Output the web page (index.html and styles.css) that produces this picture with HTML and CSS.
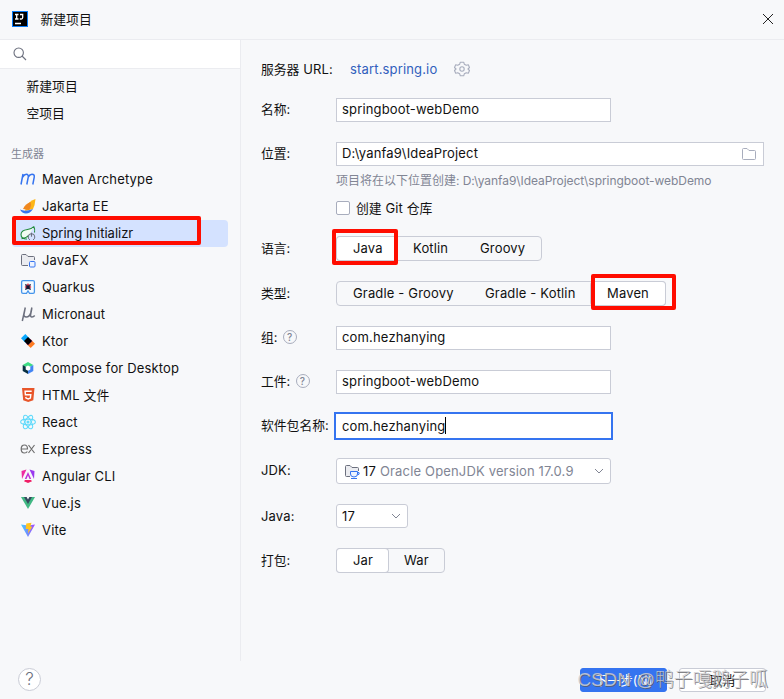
FILE: index.html
```html
<!DOCTYPE html>
<html lang="zh-CN">
<head>
<meta charset="utf-8">
<title>新建项目</title>
<link rel="stylesheet" href="styles.css">
</head>
<body>
<div class="window">
  <header class="titlebar">
    <svg class="app-icon" width="16" height="16" viewBox="0 0 16 16"><rect width="16" height="16" fill="#087cfa"/><rect x="1" y="1" width="14" height="14" fill="#000"/><path d="M3 3.500h3.500M4.700 3.500v4.500M3 8h3.500M8 3.500h2.700v3q0 1.500-1.500 1.500H7.800M3 12.500h6" fill="none" stroke="#fff" stroke-width="1.300"/></svg>
    <span class="zh">新建项目</span>
    <svg class="close" width="12" height="12" viewBox="0 0 12 12"><path d="M1 1l10 10M11 1L1 11" stroke="#222" stroke-width="1"/></svg>
  </header>
  <div class="main">
    <aside class="sidebar">
      <div class="search"><svg width="14" height="14" viewBox="0 0 14 14" fill="none" stroke="#6c707e" stroke-width="1.100"><circle cx="5.700" cy="5.700" r="4.700"/><path d="M9 9l4 4"/></svg></div>
      <nav class="top-list"><div class="plain zh">新建项目</div><div class="plain zh">空项目</div></nav>
      <div class="section">生成器</div>
      <nav class="list">
        <div class="item"><svg class="ic" viewBox="0 0 16 16" fill="none" stroke="#3574f0" stroke-width="1.500"><path d="M1 13.500L3 3M2.500 6.300Q4.300 3.300 6.300 3.300Q8.800 3.300 8.200 6.300L6.800 13.500M8 6.300Q9.800 3.300 12 3.300Q14.800 3.300 14.200 6.300L12.800 13.500"/></svg>Maven Archetype</div>
        <div class="item"><svg class="ic" viewBox="0 0 16 16"><path d="M15.500 1Q9 3 6 9l-1 4 8-2q2-4 2.500-10z" fill="#fdb515"/><path d="M10.500 4Q5 6 3 11l6 1q3-4 1.500-8z" fill="#f0881f"/><path d="M0 11.500q5 2.500 13-.5-3 4.500-7 4.500-4 0-6-4z" fill="#3574f0"/></svg>Jakarta EE</div>
        <div class="item selected"><svg class="ic" viewBox="0 0 16 16" fill="none"><path d="M13.800 1.500Q11.800 4 7.500 4.500 1 5.200 1 9.500q0 4.500 6 4.500M13.800 1.500Q15.300 4.500 14.500 7.500M1.500 13.800Q6 13.500 9 10" fill="#f2fcf3" stroke="#208a3c" stroke-width="1.100"/><circle cx="11.500" cy="12" r="3.300" fill="#d4e2ff" stroke="#6c707e" stroke-dasharray="17.500 3.200" stroke-dashoffset="-6.700"/><path d="M11.500 7.700v4" stroke="#6c707e" stroke-width="1.100"/></svg>Spring Initializr<i class="mark mark-spring"></i></div>
        <div class="item"><svg class="ic" viewBox="0 0 16 16" fill="#ebecf0" stroke="#6c707e"><path d="M8 13.500H2.500q-1 0-1-1v-9q0-1 1-1H6l2 2h5.500q1 0 1 1V8"/><rect x="9.500" y="9.500" width="5.500" height="5.500" rx="1" fill="#edf3ff" stroke="#3574f0"/></svg>JavaFX</div>
        <div class="item"><svg class="ic" viewBox="0 0 16 16"><path d="M6.500 14.400H3q-1.400 0-1.400-1.400V3Q1.600 1.600 3 1.600h10q1.400 0 1.400 1.400v10q0 1.400-1.400 1.400H9.500L8 12z" fill="#f5fbff" stroke="#4695eb" stroke-width="1.300"/><path d="M5 5l3 1 3-1-1 3 1 3-3-1-3 1 1-3z" fill="#151b3a"/><path d="M8 4l1.500 2.500h-3zM4.500 8l2-1.500v3zM11.500 8l-2-1.500v3z" fill="#e63952"/><circle cx="8" cy="8" r="1.600" fill="#101a33"/></svg>Quarkus</div>
        <div class="item"><svg class="ic" viewBox="0 0 16 16" fill="none" stroke="#6c707e" stroke-width="1.500"><path d="M5.300 1.500L2.300 15M4.800 4L4 8Q3.500 11 6.300 11 9.500 11 10.700 7L11.900 1.500M11.700 3L10.600 8.500Q10.200 11 12 11 13.500 11 14.700 9.500"/></svg>Micronaut</div>
        <div class="item"><svg class="ic" viewBox="0 0 16 16"><path d="M5.300 1L10 5.700 5.700 10 1 5.300z" fill="#08a7fc"/><path d="M10.500 6L15 10.700 10.700 15 6 10.500z" fill="#fd7b22"/><path d="M10 5.700l2.300 2.300L8 12.300 5.700 10z" fill="#a23ba3"/><path d="M8 4l4 4-4 4-4-4z" fill="#000"/></svg>Ktor</div>
        <div class="item"><svg class="ic" viewBox="0 0 16 16"><path d="M8 2l5.300 3L8 8 2.700 5z" fill="#3ddc84"/><path d="M2.700 5L8 8v6l-5.300-3z" fill="#083042"/><path d="M13.300 5L8 8v6l5.300-3z" fill="#4285f4"/><path d="M8 5.500l2.300 1.300v2.700L8 10.800 5.700 9.500V6.800z" fill="#fff"/></svg>Compose for Desktop</div>
        <div class="item"><svg class="ic" viewBox="0 0 16 16"><path d="M2 1h12.500l-1.200 12.300L8.200 15l-5-1.700z" fill="#e8562a"/><path d="M11.700 4.200H5.100l.3 3.600h5.400l-.4 3.300-2.200.8-2.200-.8-.2-1.300" fill="none" stroke="#fff" stroke-width="1.400"/></svg><span>HTML <span class="zh">文件</span></span></div>
        <div class="item"><svg class="ic" viewBox="0 0 16 16" fill="none" stroke="#61dafb" stroke-width="1.100"><ellipse cx="8" cy="8" rx="7.400" ry="2.900"/><ellipse cx="8" cy="8" rx="7.400" ry="2.900" transform="rotate(60 8 8)"/><ellipse cx="8" cy="8" rx="7.400" ry="2.900" transform="rotate(120 8 8)"/><circle cx="8" cy="8" r="1" fill="#61dafb"/></svg>React</div>
        <div class="item"><svg class="ic" viewBox="0 0 16 16" fill="none" stroke="#6e6e6e" stroke-width="1.200"><path d="M1.500 8h6Q7.500 4 4.500 4 1.200 4 1.200 8t3.300 4Q6.500 12 7.300 10.500M8.500 4l6 8M14.500 4l-6 8"/></svg>Express</div>
        <div class="item"><svg class="ic" viewBox="0 0 16 16"><path d="M6.500 1.500L1.500 3 2 11z" fill="#ee2ba0"/><path d="M9.500 1.500L14.500 3 14 11z" fill="#9938ef"/><path d="M8 4l3.200 7H9.500L8 7.500 6.500 11H4.800z" fill="#bf32d5"/><path d="M5 12h6l1 1.200L8 15l-4-1.800z" fill="#f01e66"/></svg>Angular CLI</div>
        <div class="item"><svg class="ic" viewBox="0 0 16 16"><path d="M1 2h14L8 14z" fill="#41b883"/><path d="M4 2h8L8 9z" fill="#35495e"/><path d="M6.600 2h2.800L8 4.500z" fill="#f7f8fa"/></svg>Vue.js</div>
        <div class="item"><svg class="ic" viewBox="0 0 16 16"><defs><linearGradient id="vite"><stop stop-color="#41d1ff"/><stop offset="1" stop-color="#a844fe"/></linearGradient></defs><path d="M1 2.500l7 1 7-1L8 15z" fill="url(#vite)"/><path d="M6.300 1.500L11.500.8 10.300 4.700h2L8 11.500l.5-4.500H5.700z" fill="#ffc51e"/></svg>Vite</div>
      </nav>
    </aside>
    <section class="form">
      <div class="row"><label><span class="zh">服务器</span> URL:</label><div class="server"><a>start.spring.io</a><svg width="16" height="16" viewBox="0 0 16 16" fill="none" stroke="#a8adbd" stroke-width="1.100"><path d="M6.300 1.200h3.400l.6 2 2 1.100 2-.5 1.200 2.700L14 8l1.500 1.500-1.200 2.700-2-.5-2 1.100-.6 2H6.300l-.6-2-2-1.100-2 .5L.5 9.500 2 8 .5 6.500l1.200-2.700 2 .5 2-1.100z" stroke-linejoin="round"/><circle cx="8" cy="8" r="2.200"/></svg></div></div>
      <div class="row"><label class="raised"><span class="zh">名称</span>:</label><div class="input raised">springboot-webDemo</div></div>
      <div class="row location"><label class="raised"><span class="zh">位置</span>:</label><div class="input wide"><span class="raised">D:\yanfa9\IdeaProject</span><svg width="16" height="16" viewBox="0 0 16 16" fill="none" stroke="#a8adbd"><path d="M1.500 3.500q0-1 1-1H6l2 2h5.500q1 0 1 1v7q0 1-1 1h-11q-1 0-1-1z"/></svg></div></div>
      <div class="hint"><span class="zh">项目将在以下位置创建</span>: D:\yanfa9\IdeaProject\springboot-webDemo</div>
      <div class="check"><i class="box"></i><span><span class="zh">创建</span> Git <span class="zh">仓库</span></span></div>
      <div class="row seg-row"><label class="raised"><span class="zh">语言</span>:</label><div class="segments lang"><span class="on">Java<i class="mark mark-java"></i></span><span>Kotlin</span><span>Groovy</span></div></div>
      <div class="row seg-row"><label class="raised"><span class="zh">类型</span>:</label><div class="segments type"><span>Gradle - Groovy</span><span>Gradle - Kotlin</span><span class="on">Maven<i class="mark mark-maven"></i></span></div></div>
      <div class="row"><label class="raised"><span class="zh">组</span>:<b class="q">?</b></label><div class="input raised">com.hezhanying</div></div>
      <div class="row"><label class="raised"><span class="zh">工件</span>:<b class="q">?</b></label><div class="input raised">springboot-webDemo</div></div>
      <div class="row"><label class="raised"><span class="zh">软件包名称</span>:</label><div class="input focus">com.hezhanying<i class="caret"></i></div></div>
      <div class="row jdk-row"><label class="raised">JDK:</label><div class="select jdk"><svg class="jdk-icon" width="16" height="16" viewBox="0 0 16 16" fill="#ebecf0" stroke="#6c707e"><path d="M6 13.500H2.500q-1 0-1-1v-9q0-1 1-1H6l2 2h5.500q1 0 1 1V8"/><path d="M6.500 8.500h7V11q0 3-3.500 3t-3.500-3zM13.500 9.500H15q1 2-1.500 2.500M7 15.500h6" fill="#edf3ff" stroke="#3574f0"/></svg><span>17</span><span class="muted">Oracle OpenJDK version 17.0.9</span><svg class="chev" viewBox="0 0 10 6"><path d="M1 1l4 4 4-4"/></svg></div></div>
      <div class="row"><label>Java:</label><div class="select java"><span>17</span><svg class="chev" viewBox="0 0 10 6"><path d="M1 1l4 4 4-4"/></svg></div></div>
      <div class="row seg-row"><label class="raised"><span class="zh">打包</span>:</label><div class="segments pack"><span class="on">Jar</span><span>War</span></div></div>
    </section>
  </div>
  <footer class="footer">
    <span class="help">?</span>
    <div class="buttons"><span class="btn primary"><span class="zh">下一步</span>(N)</span><span class="btn zh">取消</span></div>
    <div class="watermark">CSDN @鸭子嘎鹅子呱</div>
  </footer>
</div>
</body>
</html>
```
FILE: styles.css
```css
* { box-sizing: border-box; }
body {
  margin: 0;
  background: #f7f8fa;
  color: #111;
  font: 13px/16px Inter, "Noto Sans CJK SC", sans-serif;
  letter-spacing: 0.16px;
}
svg { flex: none; display: block; }
.zh { font-family: "Noto Sans CJK SC", sans-serif; font-size: 12.8px; letter-spacing: 0; }
.window { width: 784px; height: 699px; display: flex; flex-direction: column; overflow: hidden; }
.titlebar { height: 40px; border-bottom: 1px solid #ebecf0; display: flex; align-items: center; padding: 0 10px 1px 12px; flex: none; }
.titlebar .zh { margin-left: 12.500px; }
.close { margin-left: auto; }
.main { height: 621px; display: flex; flex: none; }
.sidebar { width: 241px; border-right: 1px solid #ebecf0; }
.search { height: 29px; background: #fff; border-bottom: 1px solid #ebecf0; display: flex; align-items: center; padding-left: 13px; }
.top-list { padding-top: 3px; }
.plain { height: 27px; line-height: 27px; padding-left: 26.500px; }
.section { height: 40px; padding: 19px 0 0 11px; font: 11px/16px "Noto Sans CJK SC", sans-serif; letter-spacing: 0; color: #818594; }
.item { position: relative; height: 27px; margin: 0 12px; padding: 0 0 2px 8px; display: flex; align-items: center; gap: 6px; border-radius: 4px; white-space: nowrap; }
.item.selected { background: #d4e2ff; letter-spacing: 0; }
.ic { width: 16px; height: 16px; }
.form { width: 543px; padding: 17px 0 0 20px; }
.row { height: 24px; margin-bottom: 20px; display: flex; align-items: center; }
.row:first-child { margin-bottom: 17px; }
.row label { width: 75px; flex: none; display: flex; align-items: center; white-space: pre; }
.raised { padding-bottom: 2px; }
.server { display: flex; align-items: center; gap: 17px; padding-left: 14px; color: #315fbd; }
.input { width: 275px; height: 24px; background: #fff; border: 1px solid #c9ccd6; padding: 0 5px; display: flex; align-items: center; }
.input.raised { padding-bottom: 2px; }
.input.wide { width: 428px; justify-content: space-between; padding-right: 6px; }
.input.focus { width: 279px; height: 28px; border: 2px solid #3574f0; margin-left: -2px; padding: 0 6px 1px; }
.caret { width: 1px; height: 17px; background: #000; }
.row.location { margin-bottom: 0; }
.hint { height: 28px; padding-left: 75px; line-height: 27px; font-size: 12px; letter-spacing: -0.05px; color: #818594; white-space: nowrap; }
.hint .zh { font-size: 12px; }
.check { height: 28px; margin-bottom: 14px; padding-left: 75px; display: flex; align-items: center; gap: 6px; }
.box { width: 14px; height: 14px; background: #fff; border: 1px solid #a8adbd; border-radius: 2px; }
.seg-row { height: 25px; }
.segments { height: 25px; display: flex; border: 1px solid #c9ccd6; border-radius: 4px; }
.segments > span { position: relative; padding-left: 16px; line-height: 23px; white-space: nowrap; }
.on { background: #fff; border-radius: 3px; box-shadow: 0 0 0 1px #c9ccd6; }
.lang { width: 206px; }
.lang > span:nth-child(1) { width: 60px; }
.lang > span:nth-child(2) { width: 67px; }
.type { width: 330px; }
.type > span:nth-child(1) { width: 132px; }
.type > span:nth-child(2) { width: 122px; }
.type > span:nth-child(3) { flex: 1; }
.pack { width: 109px; }
.pack > span:first-child { width: 51px; }
.mark { position: absolute; border: 4px solid #ff0d00; border-radius: 2px; }
.mark-spring { left: 0; top: -4px; width: 189px; height: 29px; }
.mark-java { left: -5px; top: -8px; width: 66px; height: 36px; }
.mark-maven { left: 0; top: -8px; width: 85px; height: 36px; }
.q { width: 14px; height: 14px; margin-left: 5px; border: 1px solid #a8adbd; border-radius: 50%; font: 500 10px/12px Inter, sans-serif; letter-spacing: 0; text-align: center; color: #818594; }
.jdk-row { height: 26px; }
.select { height: 24px; background: #fff; border: 1px solid #c9ccd6; border-radius: 3px; padding: 0 6px 0 5px; display: flex; align-items: center; }
.jdk { width: 275px; height: 26px; padding-left: 7px; white-space: nowrap; }
.jdk-icon { margin-right: 3px; }
.muted { color: #818594; margin-left: 4px; }
.java { width: 72px; }
.chev { width: 10px; height: 6px; margin-left: auto; fill: none; stroke: #818594; }
.footer { position: relative; flex: 1; display: flex; justify-content: space-between; padding: 7px 18px 0; }
.help { width: 23px; height: 23px; background: #fff; border: 1px solid #c9ccd6; border-radius: 50%; font: 300 17px/21px Inter, sans-serif; letter-spacing: 0; text-align: center; color: #6c707e; }
.buttons { display: flex; gap: 12px; }
.btn { width: 87px; height: 24px; border: 1px solid #c9ccd6; border-radius: 3px; background: #fff; line-height: 22px; text-align: center; }
.primary { background: #3574f0; border-color: #3574f0; color: #fff; }
.watermark { position: absolute; left: 577.500px; top: 6px; font: 300 18.800px/26px "Liberation Sans", "Noto Sans CJK SC", sans-serif; letter-spacing: 0; white-space: nowrap; color: rgba(205, 205, 208, 0.85); text-shadow: 1px 1px 0 rgba(90, 90, 95, 0.75); }
```
